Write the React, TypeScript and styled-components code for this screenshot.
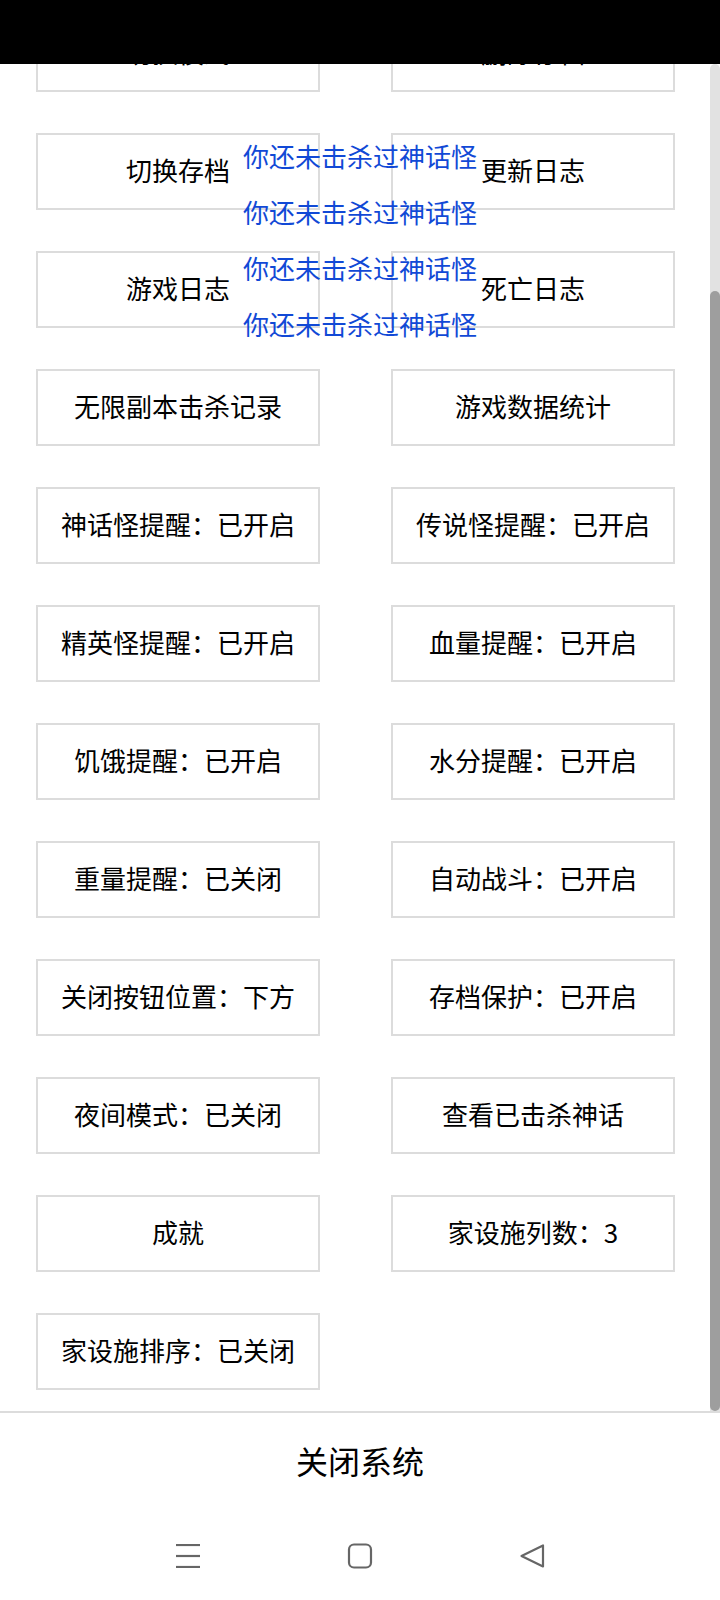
import React from "react";
import styled, { createGlobalStyle } from "styled-components";

const GlobalStyle = createGlobalStyle`
  html, body {
    margin: 0;
    padding: 0;
    background: #ffffff;
  }

  body {
    font-family: "Noto Sans CJK SC", "Noto Sans", sans-serif;
    color: #000000;
  }

  * {
    box-sizing: border-box;
  }
`;

const Screen = styled.div`
  position: relative;
  display: flex;
  flex-direction: column;
  width: 720px;
  height: 1600px;
  overflow: hidden;
  background: #ffffff;
`;

const StatusBar = styled.div`
  flex: 0 0 64px;
  background: #000000;
`;

// the list is scrolled all the way down, so the overflow is cut at the top
const ListViewport = styled.div`
  position: relative;
  flex: 0 0 1347px;
  display: flex;
  flex-direction: column;
  justify-content: flex-end;
  overflow: hidden;
`;

const ButtonGrid = styled.div`
  flex-shrink: 0;
  display: grid;
  grid-template-columns: 284px 284px;
  grid-auto-rows: 77px;
  column-gap: 71px;
  row-gap: 41px;
  padding: 224px 45px 21px 36px;
`;

const MenuBtn = styled.button`
  display: flex;
  align-items: center;
  justify-content: center;
  margin: 0;
  padding: 0 0 4px;
  border: 2px solid #dcdcdc;
  border-radius: 0;
  background: #ffffff;
  color: #000000;
  font-family: "Noto Sans CJK SC", "Noto Sans", sans-serif;
  font-size: 26px;
  line-height: 1;
  cursor: pointer;
`;

const ScrollTrack = styled.div`
  position: absolute;
  top: 0;
  right: 0;
  bottom: 0;
  width: 10px;
  display: flex;
  flex-direction: column;
  justify-content: flex-end;
  border-radius: 5px 5px 0 0;
  background: #e2e2e2;
`;

const ScrollThumb = styled.div<{ $size: number }>`
  height: ${(p) => p.$size}px;
  border-radius: 5px;
  background: #9e9e9e;
`;

const Divider = styled.div`
  flex: 0 0 2px;
  background: #dcdcdc;
`;

const CloseBar = styled.button`
  flex: 0 0 99px;
  display: flex;
  align-items: center;
  justify-content: center;
  margin: 0;
  padding: 0 0 5px;
  border: none;
  background: #ffffff;
  color: #000000;
  font-family: "Noto Sans CJK SC", "Noto Sans", sans-serif;
  font-size: 32px;
  line-height: 1;
  cursor: pointer;
`;

const NavBar = styled.nav`
  flex: 1;
  display: flex;
  align-items: center;
  justify-content: center;
  gap: 124px;
  background: #ffffff;
`;

const NavKey = styled.div`
  width: 48px;
  height: 48px;
  display: flex;
  align-items: center;
  justify-content: center;
`;

const ToastStack = styled.div`
  position: absolute;
  top: 128px;
  left: 0;
  right: 0;
  display: flex;
  flex-direction: column;
  align-items: center;
  pointer-events: none;
`;

const Toast = styled.div`
  height: 56px;
  line-height: 56px;
  font-size: 26px;
  color: #1149d6;
  white-space: nowrap;
`;

const items = [
  "切换模式",
  "删除存档",
  "切换存档",
  "更新日志",
  "游戏日志",
  "死亡日志",
  "无限副本击杀记录",
  "游戏数据统计",
  "神话怪提醒：已开启",
  "传说怪提醒：已开启",
  "精英怪提醒：已开启",
  "血量提醒：已开启",
  "饥饿提醒：已开启",
  "水分提醒：已开启",
  "重量提醒：已关闭",
  "自动战斗：已开启",
  "关闭按钮位置：下方",
  "存档保护：已开启",
  "夜间模式：已关闭",
  "查看已击杀神话",
  "成就",
  "家设施列数：3",
  "家设施排序：已关闭",
];

const toasts = ["你还未击杀过神话怪", "你还未击杀过神话怪", "你还未击杀过神话怪", "你还未击杀过神话怪"];

const MenuIcon = () => (
  <svg width="24" height="24" viewBox="0 0 24 24">
    <g stroke="#666" strokeWidth="2.2">
      <line x1="0" y1="1" x2="24" y2="1" />
      <line x1="0" y1="12" x2="24" y2="12" />
      <line x1="0" y1="23" x2="24" y2="23" />
    </g>
  </svg>
);

const HomeIcon = () => (
  <svg width="26" height="26" viewBox="0 0 26 26">
    <rect x="2" y="1.5" width="22" height="23" rx="5" fill="none" stroke="#666" strokeWidth="2.2" />
  </svg>
);

const BackIcon = () => (
  <svg width="26" height="26" viewBox="0 0 26 26">
    <path
      d="M24 2.5 L24 23.5 L2.5 13 Z"
      fill="none"
      stroke="#666"
      strokeWidth="2.2"
      strokeLinejoin="round"
    />
  </svg>
);

const App = () => {
  const viewport = 1347;
  const content = 224 + 12 * 77 + 11 * 41 + 21;
  const thumb = Math.round((viewport * viewport) / content);

  return (
    <Screen>
      <GlobalStyle />
      <StatusBar />
      <ListViewport>
        <ButtonGrid>
          {items.map((label) => (
            <MenuBtn key={label}>{label}</MenuBtn>
          ))}
        </ButtonGrid>
        <ScrollTrack>
          <ScrollThumb $size={thumb} />
        </ScrollTrack>
      </ListViewport>
      <Divider />
      <CloseBar>关闭系统</CloseBar>
      <NavBar>
        <NavKey>
          <MenuIcon />
        </NavKey>
        <NavKey>
          <HomeIcon />
        </NavKey>
        <NavKey>
          <BackIcon />
        </NavKey>
      </NavBar>
      <ToastStack>
        {toasts.map((t, i) => (
          <Toast key={i}>{t}</Toast>
        ))}
      </ToastStack>
    </Screen>
  );
};

export default App;
